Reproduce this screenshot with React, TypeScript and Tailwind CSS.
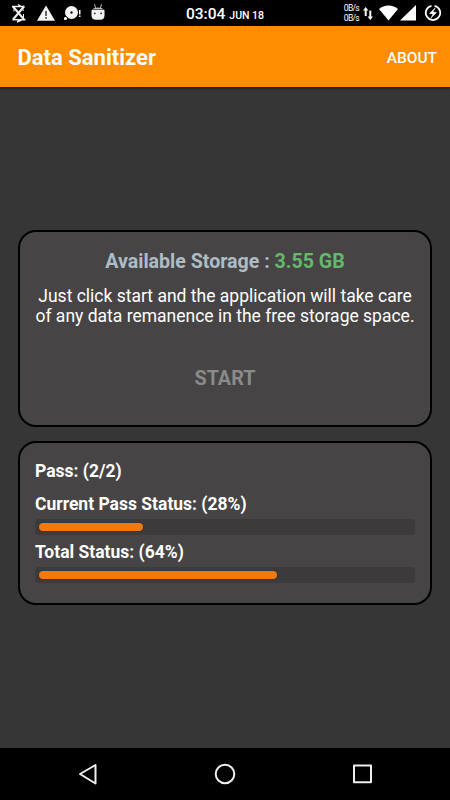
const JOBS = [
  { label: 'Current Pass Status', percent: 28 },
  { label: 'Total Status', percent: 64 },
]

function StatusBar() {
  return (
    <div className="flex h-[26px] shrink-0 items-center bg-black text-white">
      <div className="flex w-[186px] items-center">
        <svg className="ml-[11px] h-5 w-4" viewBox="0 0 16 20" fill="none" stroke="#f0f0f0" strokeWidth="1.5">
          <path d="M2 3.5 13 16.5M2 16.5 13 3.5" strokeWidth="2" />
          <path d="M1 3.5h12.5M1.5 16.8h13M7 1.5l4 2.5M6 19l4.5-2" strokeWidth="1.4" />
          <path d="M3 5.500v3M12.500 11v5M12 5.500V8" strokeWidth="1" />
        </svg>
        <svg className="ml-[10px] h-5 w-[18px]" viewBox="0 0 18 20">
          <path d="M9 2.5 18 17.8H0z" fill="#f5f5f5" />
          <path d="M8.1 8h1.8v5H8.1zm0 6h1.8v1.8H8.1z" fill="#555" />
        </svg>
        <svg className="ml-[9px] h-5 w-[18px]" viewBox="0 0 18 20" fill="#f5f5f5">
          <circle cx="7.5" cy="9.5" r="6.5" />
          <circle cx="7.5" cy="9.5" r="1.2" fill="#111" />
          <circle cx="1.5" cy="15.5" r="2.2" fill="#000" />
          <circle cx="1.5" cy="15.5" r="1.6" />
          <path d="M15 7h1.5v4.5H15zm0 5.5h1.5V14H15z" />
        </svg>
        <svg className="ml-[9px] h-5 w-[14px]" viewBox="0 0 14 20">
          <path d="M3.5 1.2 4.5 5M10.5 1.2 9.5 5" stroke="#bbb" strokeWidth="1" />
          <path d="M.8 6.5Q3 4.5 7 4.5t6.2 2z" fill="#bbb" />
          <path d="M.5 7h13v5.500q0 4.200-4.500 4.200H5q-4.500 0-4.500-4.200z" fill="#f2f2f2" />
          <circle cx="3.8" cy="10.3" r=".9" fill="#222" />
          <circle cx="10.2" cy="10.3" r=".9" fill="#222" />
        </svg>
      </div>
      <div className="flex items-baseline gap-[4px] pt-[3px] whitespace-nowrap">
        <span className="text-[15.5px] leading-5 font-medium">03:04</span>
        <span className="text-[10.5px] leading-5 font-medium">JUN 18</span>
      </div>
      <div className="mr-[8px] ml-auto flex items-center">
        <div className="text-[8.5px] leading-[10px] tracking-[-0.7px]">
          <div>0B/s</div>
          <div>0B/s</div>
        </div>
        <svg className="ml-[4px] h-5 w-[10px]" viewBox="0 0 10 20" fill="#f5f5f5">
          <path d="M2.7 4 5.4 7.5H3.7V13h-2V7.5H0zM7.3 17 10 13.5H8.3V7.5h-2v6H4.6z" />
        </svg>
        <svg className="ml-[6px] h-5 w-[19px]" viewBox="0 0 19 20" fill="#fff">
          <path d="M9.5 17.5 0 6Q4 2.5 9.5 2.5T19 6z" />
        </svg>
        <svg className="ml-[2px] h-5 w-4" viewBox="0 0 16 20" fill="#fff">
          <path d="M16 2v15.5H0z" />
        </svg>
        <svg className="ml-[8px] h-5 w-[18px]" viewBox="0 0 18 20" fill="none" stroke="#fff">
          <path d="M10.5 2.8a7.2 7.2 0 1 1-3 0" strokeWidth="1.8" />
          <path d="m11 5-5.500 5.500 3.500.4-2 4.100 5.500-5.500-3.500-.4z" fill="#fff" strokeWidth=".5" />
        </svg>
      </div>
    </div>
  )
}

function Progress({ label, percent }: { label: string; percent: number }) {
  return (
    <div>
      <div className="text-[17.5px] leading-5 font-bold">
        {label}: ({percent}%)
      </div>
      <div className="mt-[5px] h-4 rounded-[4px] bg-[#3c3a3b] p-1">
        <div
          className="h-2 rounded-full bg-[#f3790e] shadow-[0_0_1px_#003340]"
          style={{ width: `${percent}%` }}
        />
      </div>
    </div>
  )
}

function NavBar() {
  return (
    <div className="flex h-[52px] shrink-0 items-center bg-black">
      <svg className="h-[52px] w-full" viewBox="0 0 450 52" fill="none" stroke="#eee" strokeWidth="2" strokeLinejoin="round">
        <path d="M95.5 17v18.5L80 26z" />
        <circle cx="225" cy="26" r="9.3" />
        <rect x="354" y="17.5" width="17" height="16.7" />
      </svg>
    </div>
  )
}

export default function App() {
  return (
    <div className="flex h-[800px] w-[450px] flex-col overflow-hidden bg-[#363636] font-[Roboto,sans-serif] text-white">
      <StatusBar />
      <header className="flex h-[62px] shrink-0 items-center justify-between border-b border-[#082b38] bg-[#ff8d02] pt-[3px] pr-[13px] pl-[17.5px] shadow-[0_1px_2px_#222]">
        <h1 className="text-[22px] leading-7 font-bold">Data Sanitizer</h1>
        <button className="text-[15.5px] leading-6 font-medium">ABOUT</button>
      </header>

      <main className="flex-1 px-[18px] pt-[142px]">
        <section className="h-[197px] rounded-[18px] border-2 border-black bg-[#464445] pt-[18px] text-center">
          <h2 className="text-[19.6px] leading-6 font-bold text-[#aebdc5]">
            Available Storage : <span className="text-[#64b96a]">3.55 GB</span>
          </h2>
          <p className="mt-[12px] text-[17.5px] leading-5 whitespace-nowrap">
            Just click start and the application will take care
            <br />
            of any data remanence in the free storage space.
          </p>
          <button className="mt-[41px] text-[19.8px] leading-6 font-bold text-[#8a8a8a]" disabled>
            START
          </button>
        </section>

        <section className="mt-[14px] h-[164px] rounded-[18px] border-2 border-black bg-[#464445] px-[15px] pt-[18px]">
          <div className="mb-[13px] text-[17.5px] leading-5 font-bold">Pass: (2/2)</div>
          <div className="space-y-[7px]">
            {JOBS.map((job) => (
              <Progress key={job.label} label={job.label} percent={job.percent} />
            ))}
          </div>
        </section>
      </main>

      <NavBar />
    </div>
  )
}
